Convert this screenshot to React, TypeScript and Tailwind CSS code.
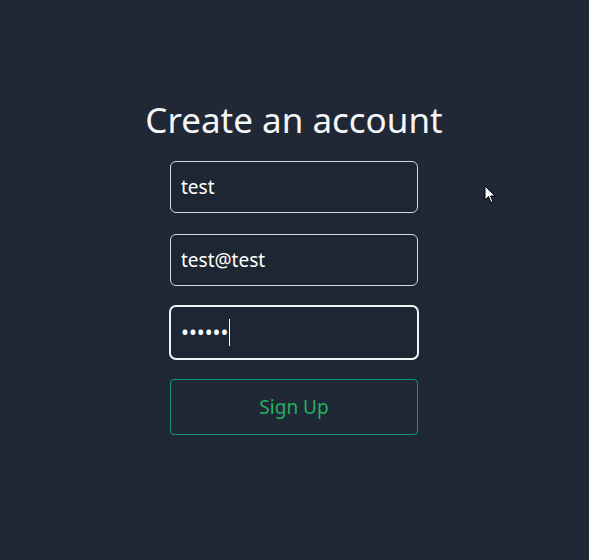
import React from "react";

const App: React.FC = () => {
  return (
    <div
      className="relative min-h-screen bg-[#212835] text-white"
      style={{ fontFamily: '"Noto Sans", "Open Sans", sans-serif' }}
    >
      <div className="flex flex-col items-center pt-[96px] pr-px">
        <h1 className="text-[35px] leading-[48px] text-[#f5f6f8] mb-[17px]">
          Create an account
        </h1>
        <form className="flex flex-col w-[248px]">
          <input
            readOnly
            value="test"
            className="h-[52px] w-full rounded-[6px] border border-[#d5d8de] bg-[#1f2633] px-[10px] text-[19px] text-white outline-none"
          />
          <input
            readOnly
            value="test@test"
            className="mt-[21px] h-[52px] w-full rounded-[6px] border border-[#d5d8de] bg-[#1f2633] px-[10px] text-[19px] text-white outline-none"
          />
          <div className="mt-[19px] flex h-[55px] w-[250px] -ml-px items-center rounded-[7px] border-2 border-[#f2f3f5] bg-[#1f2633] px-[10px]">
            <span className="text-[21px] leading-none text-white">••••••</span>
            <span className="ml-[1px] h-[27px] w-px bg-white" />
          </div>
          <button
            type="button"
            className="mt-[19px] h-[56px] w-full rounded-[4px] border border-[#159b6c] bg-transparent text-[19px] text-[#20b160]"
          >
            Sign Up
          </button>
        </form>
      </div>
      <svg
        className="absolute left-[484px] top-[185px]"
        width="12"
        height="19"
        viewBox="0 0 12 19"
      >
        <path
          d="M1 1 L1 15 L4.5 11.5 L7 17.5 L9 16.6 L6.6 11 L11 11 Z"
          fill="#fff"
          stroke="#000"
          strokeWidth="1"
        />
      </svg>
    </div>
  );
};

export default App;
